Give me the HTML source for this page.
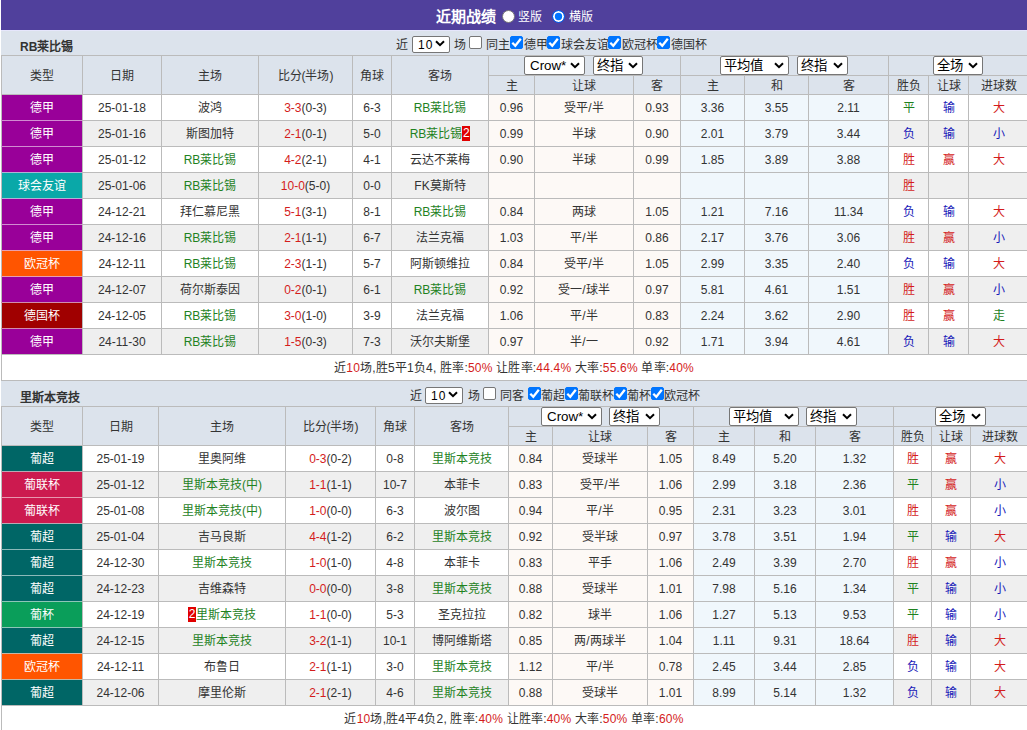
<!DOCTYPE html>
<html lang="zh-CN"><head><meta charset="utf-8"><style>
*{margin:0;padding:0;box-sizing:border-box}
html,body{width:1027px;height:730px;overflow:hidden;background:#fff}
body{font-family:"Liberation Sans",sans-serif;font-size:12px;color:#333}
#w{position:relative;width:1027px;height:730px;overflow:hidden}
#w>div{position:absolute}
.c{text-align:center;line-height:27px;white-space:nowrap;overflow:hidden}
.lg{color:#fff;font-weight:500}
.sm{letter-spacing:0.2px}
.st{font-weight:bold;font-size:12px;color:#333;white-space:nowrap}
.tx{height:24px;line-height:29px;white-space:nowrap}
.ttl{font-weight:bold;font-size:15px;color:#fff;white-space:nowrap}
.ttx{height:30px;line-height:34px;color:#fff;white-space:nowrap}
.rd{width:13px;height:13px;border-radius:50%;background:#fff;border:1px solid #767676}
.rd.on{background:#0075ff;border:1px solid #0a5ee8;box-shadow:inset 0 0 0 1.8px #fff}
.cb{width:13px;height:13px;border:1px solid #767676;border-radius:2px;background:#fff}
.cb.on{background:#0075ff;border-color:#0075ff}
.cb.on svg{position:absolute;left:-1px;top:-1px}
.sel{background:#fff;border:1px solid #767676;border-radius:2px;box-sizing:content-box;font-size:13.33px;color:#000}
.sel span{position:absolute;left:4px;top:0;line-height:18px;white-space:nowrap}
.sel .chev{position:absolute;right:4px;top:5px}
.s10 .chev{top:3px}
.s10{font-size:12px;letter-spacing:1px}
.s10 span{line-height:16px;top:0px;font-size:12px}
.bd{background:#e00000;color:#fff;display:inline-block;width:8px;height:15px;line-height:15px;vertical-align:middle;text-align:center;position:relative;top:-1px}
</style></head>
<body><div id="w">
<div style="left:1px;top:0px;width:1026px;height:30px;background:#50409c"></div>
<div style="left:1px;top:30px;width:1026px;height:1px;background:#e6e6fc"></div>
<div class="ttl" style="left:436px;top:0;height:30px;line-height:33px">近期战绩</div>
<div class="rd" style="left:502px;top:10px"></div>
<div class="ttx" style="left:518px;top:0">竖版</div>
<div class="rd on" style="left:552px;top:10px"></div>
<div class="ttx" style="left:569px;top:0">横版</div>
<div style="left:1px;top:31px;width:1026px;height:24px;background:#dce3ec"></div>
<div class="st" style="left:20px;top:31px;height:24px;line-height:32px">RB莱比锡</div>
<div class="tx" style="left:396px;top:31px">近</div>
<div class="sel s10" style="left:412px;top:36px;width:36px;height:15px"><span style="left:5px">10</span><svg class="chev" width="10" height="7"><path d="M1 1.2 L5 5.2 L9 1.2" fill="none" stroke="#000" stroke-width="2"/></svg></div>
<div class="tx" style="left:454px;top:31px">场</div>
<div class="cb" style="left:469px;top:36px"></div>
<div class="tx" style="left:486px;top:31px">同主</div>
<div class="cb on" style="left:510px;top:36px"><svg width="13" height="13"><path d="M2.3 6.8 L5.3 9.8 L10.8 2.8" fill="none" stroke="#fff" stroke-width="2.3"/></svg></div>
<div class="tx" style="left:524px;top:31px">德甲</div>
<div class="cb on" style="left:547px;top:36px"><svg width="13" height="13"><path d="M2.3 6.8 L5.3 9.8 L10.8 2.8" fill="none" stroke="#fff" stroke-width="2.3"/></svg></div>
<div class="tx" style="left:561px;top:31px">球会友谊</div>
<div class="cb on" style="left:608px;top:36px"><svg width="13" height="13"><path d="M2.3 6.8 L5.3 9.8 L10.8 2.8" fill="none" stroke="#fff" stroke-width="2.3"/></svg></div>
<div class="tx" style="left:622px;top:31px">欧冠杯</div>
<div class="cb on" style="left:657px;top:36px"><svg width="13" height="13"><path d="M2.3 6.8 L5.3 9.8 L10.8 2.8" fill="none" stroke="#fff" stroke-width="2.3"/></svg></div>
<div class="tx" style="left:671px;top:31px">德国杯</div>
<div style="left:1px;top:55px;width:1026px;height:1px;background:#bbbbbb"></div>
<div style="left:1px;top:56px;width:1026px;height:38px;background:#dce3ec"></div>
<div class="c hd" style="left:2px;top:56px;width:80px;height:38px;line-height:40px">类型</div>
<div class="c hd" style="left:83px;top:56px;width:78px;height:38px;line-height:40px">日期</div>
<div class="c hd" style="left:162px;top:56px;width:96px;height:38px;line-height:40px">主场</div>
<div class="c hd" style="left:259px;top:56px;width:93px;height:38px;line-height:40px">比分(半场)</div>
<div class="c hd" style="left:353px;top:56px;width:38px;height:38px;line-height:40px">角球</div>
<div class="c hd" style="left:392px;top:56px;width:96px;height:38px;line-height:40px">客场</div>
<div class="c hd" style="left:489px;top:76px;width:45px;height:18px;line-height:21px">主</div>
<div class="c hd" style="left:535px;top:76px;width:98px;height:18px;line-height:21px">让球</div>
<div class="c hd" style="left:634px;top:76px;width:46px;height:18px;line-height:21px">客</div>
<div class="c hd" style="left:681px;top:76px;width:63px;height:18px;line-height:21px">主</div>
<div class="c hd" style="left:745px;top:76px;width:63px;height:18px;line-height:21px">和</div>
<div class="c hd" style="left:809px;top:76px;width:79px;height:18px;line-height:21px">客</div>
<div class="c hd" style="left:889px;top:76px;width:39px;height:18px;line-height:21px">胜负</div>
<div class="c hd" style="left:929px;top:76px;width:39px;height:18px;line-height:21px">让球</div>
<div class="c hd" style="left:969px;top:76px;width:59px;height:18px;line-height:21px">进球数</div>
<div style="left:1px;top:56px;width:1px;height:38px;background:#bbbbbb"></div>
<div style="left:82px;top:56px;width:1px;height:38px;background:#bbbbbb"></div>
<div style="left:161px;top:56px;width:1px;height:38px;background:#bbbbbb"></div>
<div style="left:258px;top:56px;width:1px;height:38px;background:#bbbbbb"></div>
<div style="left:352px;top:56px;width:1px;height:38px;background:#bbbbbb"></div>
<div style="left:391px;top:56px;width:1px;height:38px;background:#bbbbbb"></div>
<div style="left:488px;top:56px;width:1px;height:38px;background:#bbbbbb"></div>
<div style="left:534px;top:75px;width:1px;height:19px;background:#bbbbbb"></div>
<div style="left:633px;top:75px;width:1px;height:19px;background:#bbbbbb"></div>
<div style="left:680px;top:56px;width:1px;height:38px;background:#bbbbbb"></div>
<div style="left:744px;top:75px;width:1px;height:19px;background:#bbbbbb"></div>
<div style="left:808px;top:75px;width:1px;height:19px;background:#bbbbbb"></div>
<div style="left:888px;top:56px;width:1px;height:38px;background:#bbbbbb"></div>
<div style="left:928px;top:75px;width:1px;height:19px;background:#bbbbbb"></div>
<div style="left:968px;top:75px;width:1px;height:19px;background:#bbbbbb"></div>
<div style="left:488px;top:75px;width:539px;height:1px;background:#bbbbbb"></div>
<div style="left:1px;top:94px;width:1026px;height:1px;background:#bbbbbb"></div>
<div class="c lg" style="left:2px;top:95px;width:80px;height:25px;background:#990099">德甲</div>
<div class="c " style="left:83px;top:95px;width:78px;height:25px;background:#ffffff">25-01-18</div>
<div class="c " style="left:162px;top:95px;width:96px;height:25px;background:#ffffff">波鸿</div>
<div class="c " style="left:259px;top:95px;width:93px;height:25px;background:#ffffff"><span style="color:#d41c1c">3-3</span>(0-3)</div>
<div class="c " style="left:353px;top:95px;width:38px;height:25px;background:#ffffff">6-3</div>
<div class="c " style="left:392px;top:95px;width:96px;height:25px;background:#ffffff"><span style="color:#1f821f">RB莱比锡</span></div>
<div class="c " style="left:489px;top:95px;width:45px;height:25px;background:#fdf9f6">0.96</div>
<div class="c " style="left:535px;top:95px;width:98px;height:25px;background:#fdf9f6">受平/半</div>
<div class="c " style="left:634px;top:95px;width:46px;height:25px;background:#fdf9f6">0.93</div>
<div class="c " style="left:681px;top:95px;width:63px;height:25px;background:#f0f7fc">3.36</div>
<div class="c " style="left:745px;top:95px;width:63px;height:25px;background:#f0f7fc">3.55</div>
<div class="c " style="left:809px;top:95px;width:79px;height:25px;background:#f0f7fc">2.11</div>
<div class="c " style="left:889px;top:95px;width:39px;height:25px;background:#ffffff"><span style="color:#1f821f">平</span></div>
<div class="c " style="left:929px;top:95px;width:39px;height:25px;background:#ffffff"><span style="color:#1818b8">输</span></div>
<div class="c " style="left:969px;top:95px;width:59px;height:25px;background:#ffffff"><span style="color:#d41c1c">大</span></div>
<div style="left:1px;top:95px;width:1px;height:25px;background:#bbbbbb"></div>
<div style="left:82px;top:95px;width:1px;height:25px;background:#bbbbbb"></div>
<div style="left:161px;top:95px;width:1px;height:25px;background:#bbbbbb"></div>
<div style="left:258px;top:95px;width:1px;height:25px;background:#bbbbbb"></div>
<div style="left:352px;top:95px;width:1px;height:25px;background:#bbbbbb"></div>
<div style="left:391px;top:95px;width:1px;height:25px;background:#bbbbbb"></div>
<div style="left:488px;top:95px;width:1px;height:25px;background:#bbbbbb"></div>
<div style="left:534px;top:95px;width:1px;height:25px;background:#bbbbbb"></div>
<div style="left:633px;top:95px;width:1px;height:25px;background:#bbbbbb"></div>
<div style="left:680px;top:95px;width:1px;height:25px;background:#bbbbbb"></div>
<div style="left:744px;top:95px;width:1px;height:25px;background:#bbbbbb"></div>
<div style="left:808px;top:95px;width:1px;height:25px;background:#bbbbbb"></div>
<div style="left:888px;top:95px;width:1px;height:25px;background:#bbbbbb"></div>
<div style="left:928px;top:95px;width:1px;height:25px;background:#bbbbbb"></div>
<div style="left:968px;top:95px;width:1px;height:25px;background:#bbbbbb"></div>
<div style="left:1px;top:120px;width:1026px;height:1px;background:#bbbbbb"></div>
<div style="left:1px;top:120px;width:81px;height:1px;background:#d18cd1"></div>
<div class="c lg" style="left:2px;top:121px;width:80px;height:25px;background:#990099">德甲</div>
<div class="c " style="left:83px;top:121px;width:78px;height:25px;background:#efefef">25-01-16</div>
<div class="c " style="left:162px;top:121px;width:96px;height:25px;background:#efefef">斯图加特</div>
<div class="c " style="left:259px;top:121px;width:93px;height:25px;background:#efefef"><span style="color:#d41c1c">2-1</span>(0-1)</div>
<div class="c " style="left:353px;top:121px;width:38px;height:25px;background:#efefef">5-0</div>
<div class="c " style="left:392px;top:121px;width:96px;height:25px;background:#efefef"><span style="color:#1f821f">RB莱比锡<span class="bd">2</span></span></div>
<div class="c " style="left:489px;top:121px;width:45px;height:25px;background:#fdf9f6">0.99</div>
<div class="c " style="left:535px;top:121px;width:98px;height:25px;background:#fdf9f6">半球</div>
<div class="c " style="left:634px;top:121px;width:46px;height:25px;background:#fdf9f6">0.90</div>
<div class="c " style="left:681px;top:121px;width:63px;height:25px;background:#f0f7fc">2.01</div>
<div class="c " style="left:745px;top:121px;width:63px;height:25px;background:#f0f7fc">3.79</div>
<div class="c " style="left:809px;top:121px;width:79px;height:25px;background:#f0f7fc">3.44</div>
<div class="c " style="left:889px;top:121px;width:39px;height:25px;background:#efefef"><span style="color:#1818b8">负</span></div>
<div class="c " style="left:929px;top:121px;width:39px;height:25px;background:#efefef"><span style="color:#1818b8">输</span></div>
<div class="c " style="left:969px;top:121px;width:59px;height:25px;background:#efefef"><span style="color:#1818b8">小</span></div>
<div style="left:1px;top:121px;width:1px;height:25px;background:#bbbbbb"></div>
<div style="left:82px;top:121px;width:1px;height:25px;background:#bbbbbb"></div>
<div style="left:161px;top:121px;width:1px;height:25px;background:#bbbbbb"></div>
<div style="left:258px;top:121px;width:1px;height:25px;background:#bbbbbb"></div>
<div style="left:352px;top:121px;width:1px;height:25px;background:#bbbbbb"></div>
<div style="left:391px;top:121px;width:1px;height:25px;background:#bbbbbb"></div>
<div style="left:488px;top:121px;width:1px;height:25px;background:#bbbbbb"></div>
<div style="left:534px;top:121px;width:1px;height:25px;background:#bbbbbb"></div>
<div style="left:633px;top:121px;width:1px;height:25px;background:#bbbbbb"></div>
<div style="left:680px;top:121px;width:1px;height:25px;background:#bbbbbb"></div>
<div style="left:744px;top:121px;width:1px;height:25px;background:#bbbbbb"></div>
<div style="left:808px;top:121px;width:1px;height:25px;background:#bbbbbb"></div>
<div style="left:888px;top:121px;width:1px;height:25px;background:#bbbbbb"></div>
<div style="left:928px;top:121px;width:1px;height:25px;background:#bbbbbb"></div>
<div style="left:968px;top:121px;width:1px;height:25px;background:#bbbbbb"></div>
<div style="left:1px;top:146px;width:1026px;height:1px;background:#bbbbbb"></div>
<div style="left:1px;top:146px;width:81px;height:1px;background:#d18cd1"></div>
<div class="c lg" style="left:2px;top:147px;width:80px;height:25px;background:#990099">德甲</div>
<div class="c " style="left:83px;top:147px;width:78px;height:25px;background:#ffffff">25-01-12</div>
<div class="c " style="left:162px;top:147px;width:96px;height:25px;background:#ffffff"><span style="color:#1f821f">RB莱比锡</span></div>
<div class="c " style="left:259px;top:147px;width:93px;height:25px;background:#ffffff"><span style="color:#d41c1c">4-2</span>(2-1)</div>
<div class="c " style="left:353px;top:147px;width:38px;height:25px;background:#ffffff">4-1</div>
<div class="c " style="left:392px;top:147px;width:96px;height:25px;background:#ffffff">云达不莱梅</div>
<div class="c " style="left:489px;top:147px;width:45px;height:25px;background:#fdf9f6">0.90</div>
<div class="c " style="left:535px;top:147px;width:98px;height:25px;background:#fdf9f6">半球</div>
<div class="c " style="left:634px;top:147px;width:46px;height:25px;background:#fdf9f6">0.99</div>
<div class="c " style="left:681px;top:147px;width:63px;height:25px;background:#f0f7fc">1.85</div>
<div class="c " style="left:745px;top:147px;width:63px;height:25px;background:#f0f7fc">3.89</div>
<div class="c " style="left:809px;top:147px;width:79px;height:25px;background:#f0f7fc">3.88</div>
<div class="c " style="left:889px;top:147px;width:39px;height:25px;background:#ffffff"><span style="color:#d41c1c">胜</span></div>
<div class="c " style="left:929px;top:147px;width:39px;height:25px;background:#ffffff"><span style="color:#d41c1c">赢</span></div>
<div class="c " style="left:969px;top:147px;width:59px;height:25px;background:#ffffff"><span style="color:#d41c1c">大</span></div>
<div style="left:1px;top:147px;width:1px;height:25px;background:#bbbbbb"></div>
<div style="left:82px;top:147px;width:1px;height:25px;background:#bbbbbb"></div>
<div style="left:161px;top:147px;width:1px;height:25px;background:#bbbbbb"></div>
<div style="left:258px;top:147px;width:1px;height:25px;background:#bbbbbb"></div>
<div style="left:352px;top:147px;width:1px;height:25px;background:#bbbbbb"></div>
<div style="left:391px;top:147px;width:1px;height:25px;background:#bbbbbb"></div>
<div style="left:488px;top:147px;width:1px;height:25px;background:#bbbbbb"></div>
<div style="left:534px;top:147px;width:1px;height:25px;background:#bbbbbb"></div>
<div style="left:633px;top:147px;width:1px;height:25px;background:#bbbbbb"></div>
<div style="left:680px;top:147px;width:1px;height:25px;background:#bbbbbb"></div>
<div style="left:744px;top:147px;width:1px;height:25px;background:#bbbbbb"></div>
<div style="left:808px;top:147px;width:1px;height:25px;background:#bbbbbb"></div>
<div style="left:888px;top:147px;width:1px;height:25px;background:#bbbbbb"></div>
<div style="left:928px;top:147px;width:1px;height:25px;background:#bbbbbb"></div>
<div style="left:968px;top:147px;width:1px;height:25px;background:#bbbbbb"></div>
<div style="left:1px;top:172px;width:1026px;height:1px;background:#bbbbbb"></div>
<div style="left:1px;top:172px;width:81px;height:1px;background:#b0b2d4"></div>
<div class="c lg" style="left:2px;top:173px;width:80px;height:25px;background:#0aa8a8">球会友谊</div>
<div class="c " style="left:83px;top:173px;width:78px;height:25px;background:#efefef">25-01-06</div>
<div class="c " style="left:162px;top:173px;width:96px;height:25px;background:#efefef"><span style="color:#1f821f">RB莱比锡</span></div>
<div class="c " style="left:259px;top:173px;width:93px;height:25px;background:#efefef"><span style="color:#d41c1c">10-0</span>(5-0)</div>
<div class="c " style="left:353px;top:173px;width:38px;height:25px;background:#efefef">0-0</div>
<div class="c " style="left:392px;top:173px;width:96px;height:25px;background:#efefef">FK莫斯特</div>
<div class="c " style="left:489px;top:173px;width:45px;height:25px;background:#fdf9f6"></div>
<div class="c " style="left:535px;top:173px;width:98px;height:25px;background:#fdf9f6"></div>
<div class="c " style="left:634px;top:173px;width:46px;height:25px;background:#fdf9f6"></div>
<div class="c " style="left:681px;top:173px;width:63px;height:25px;background:#f0f7fc"></div>
<div class="c " style="left:745px;top:173px;width:63px;height:25px;background:#f0f7fc"></div>
<div class="c " style="left:809px;top:173px;width:79px;height:25px;background:#f0f7fc"></div>
<div class="c " style="left:889px;top:173px;width:39px;height:25px;background:#efefef"><span style="color:#d41c1c">胜</span></div>
<div class="c " style="left:929px;top:173px;width:39px;height:25px;background:#efefef"></div>
<div class="c " style="left:969px;top:173px;width:59px;height:25px;background:#efefef"></div>
<div style="left:1px;top:173px;width:1px;height:25px;background:#bbbbbb"></div>
<div style="left:82px;top:173px;width:1px;height:25px;background:#bbbbbb"></div>
<div style="left:161px;top:173px;width:1px;height:25px;background:#bbbbbb"></div>
<div style="left:258px;top:173px;width:1px;height:25px;background:#bbbbbb"></div>
<div style="left:352px;top:173px;width:1px;height:25px;background:#bbbbbb"></div>
<div style="left:391px;top:173px;width:1px;height:25px;background:#bbbbbb"></div>
<div style="left:488px;top:173px;width:1px;height:25px;background:#bbbbbb"></div>
<div style="left:534px;top:173px;width:1px;height:25px;background:#bbbbbb"></div>
<div style="left:633px;top:173px;width:1px;height:25px;background:#bbbbbb"></div>
<div style="left:680px;top:173px;width:1px;height:25px;background:#bbbbbb"></div>
<div style="left:744px;top:173px;width:1px;height:25px;background:#bbbbbb"></div>
<div style="left:808px;top:173px;width:1px;height:25px;background:#bbbbbb"></div>
<div style="left:888px;top:173px;width:1px;height:25px;background:#bbbbbb"></div>
<div style="left:928px;top:173px;width:1px;height:25px;background:#bbbbbb"></div>
<div style="left:968px;top:173px;width:1px;height:25px;background:#bbbbbb"></div>
<div style="left:1px;top:198px;width:1026px;height:1px;background:#bbbbbb"></div>
<div style="left:1px;top:198px;width:81px;height:1px;background:#b0b2d4"></div>
<div class="c lg" style="left:2px;top:199px;width:80px;height:25px;background:#990099">德甲</div>
<div class="c " style="left:83px;top:199px;width:78px;height:25px;background:#ffffff">24-12-21</div>
<div class="c " style="left:162px;top:199px;width:96px;height:25px;background:#ffffff">拜仁慕尼黑</div>
<div class="c " style="left:259px;top:199px;width:93px;height:25px;background:#ffffff"><span style="color:#d41c1c">5-1</span>(3-1)</div>
<div class="c " style="left:353px;top:199px;width:38px;height:25px;background:#ffffff">8-1</div>
<div class="c " style="left:392px;top:199px;width:96px;height:25px;background:#ffffff"><span style="color:#1f821f">RB莱比锡</span></div>
<div class="c " style="left:489px;top:199px;width:45px;height:25px;background:#fdf9f6">0.84</div>
<div class="c " style="left:535px;top:199px;width:98px;height:25px;background:#fdf9f6">两球</div>
<div class="c " style="left:634px;top:199px;width:46px;height:25px;background:#fdf9f6">1.05</div>
<div class="c " style="left:681px;top:199px;width:63px;height:25px;background:#f0f7fc">1.21</div>
<div class="c " style="left:745px;top:199px;width:63px;height:25px;background:#f0f7fc">7.16</div>
<div class="c " style="left:809px;top:199px;width:79px;height:25px;background:#f0f7fc">11.34</div>
<div class="c " style="left:889px;top:199px;width:39px;height:25px;background:#ffffff"><span style="color:#1818b8">负</span></div>
<div class="c " style="left:929px;top:199px;width:39px;height:25px;background:#ffffff"><span style="color:#1818b8">输</span></div>
<div class="c " style="left:969px;top:199px;width:59px;height:25px;background:#ffffff"><span style="color:#d41c1c">大</span></div>
<div style="left:1px;top:199px;width:1px;height:25px;background:#bbbbbb"></div>
<div style="left:82px;top:199px;width:1px;height:25px;background:#bbbbbb"></div>
<div style="left:161px;top:199px;width:1px;height:25px;background:#bbbbbb"></div>
<div style="left:258px;top:199px;width:1px;height:25px;background:#bbbbbb"></div>
<div style="left:352px;top:199px;width:1px;height:25px;background:#bbbbbb"></div>
<div style="left:391px;top:199px;width:1px;height:25px;background:#bbbbbb"></div>
<div style="left:488px;top:199px;width:1px;height:25px;background:#bbbbbb"></div>
<div style="left:534px;top:199px;width:1px;height:25px;background:#bbbbbb"></div>
<div style="left:633px;top:199px;width:1px;height:25px;background:#bbbbbb"></div>
<div style="left:680px;top:199px;width:1px;height:25px;background:#bbbbbb"></div>
<div style="left:744px;top:199px;width:1px;height:25px;background:#bbbbbb"></div>
<div style="left:808px;top:199px;width:1px;height:25px;background:#bbbbbb"></div>
<div style="left:888px;top:199px;width:1px;height:25px;background:#bbbbbb"></div>
<div style="left:928px;top:199px;width:1px;height:25px;background:#bbbbbb"></div>
<div style="left:968px;top:199px;width:1px;height:25px;background:#bbbbbb"></div>
<div style="left:1px;top:224px;width:1026px;height:1px;background:#bbbbbb"></div>
<div style="left:1px;top:224px;width:81px;height:1px;background:#d18cd1"></div>
<div class="c lg" style="left:2px;top:225px;width:80px;height:25px;background:#990099">德甲</div>
<div class="c " style="left:83px;top:225px;width:78px;height:25px;background:#efefef">24-12-16</div>
<div class="c " style="left:162px;top:225px;width:96px;height:25px;background:#efefef"><span style="color:#1f821f">RB莱比锡</span></div>
<div class="c " style="left:259px;top:225px;width:93px;height:25px;background:#efefef"><span style="color:#d41c1c">2-1</span>(1-1)</div>
<div class="c " style="left:353px;top:225px;width:38px;height:25px;background:#efefef">6-7</div>
<div class="c " style="left:392px;top:225px;width:96px;height:25px;background:#efefef">法兰克福</div>
<div class="c " style="left:489px;top:225px;width:45px;height:25px;background:#fdf9f6">1.03</div>
<div class="c " style="left:535px;top:225px;width:98px;height:25px;background:#fdf9f6">平/半</div>
<div class="c " style="left:634px;top:225px;width:46px;height:25px;background:#fdf9f6">0.86</div>
<div class="c " style="left:681px;top:225px;width:63px;height:25px;background:#f0f7fc">2.17</div>
<div class="c " style="left:745px;top:225px;width:63px;height:25px;background:#f0f7fc">3.76</div>
<div class="c " style="left:809px;top:225px;width:79px;height:25px;background:#f0f7fc">3.06</div>
<div class="c " style="left:889px;top:225px;width:39px;height:25px;background:#efefef"><span style="color:#d41c1c">胜</span></div>
<div class="c " style="left:929px;top:225px;width:39px;height:25px;background:#efefef"><span style="color:#d41c1c">赢</span></div>
<div class="c " style="left:969px;top:225px;width:59px;height:25px;background:#efefef"><span style="color:#1818b8">小</span></div>
<div style="left:1px;top:225px;width:1px;height:25px;background:#bbbbbb"></div>
<div style="left:82px;top:225px;width:1px;height:25px;background:#bbbbbb"></div>
<div style="left:161px;top:225px;width:1px;height:25px;background:#bbbbbb"></div>
<div style="left:258px;top:225px;width:1px;height:25px;background:#bbbbbb"></div>
<div style="left:352px;top:225px;width:1px;height:25px;background:#bbbbbb"></div>
<div style="left:391px;top:225px;width:1px;height:25px;background:#bbbbbb"></div>
<div style="left:488px;top:225px;width:1px;height:25px;background:#bbbbbb"></div>
<div style="left:534px;top:225px;width:1px;height:25px;background:#bbbbbb"></div>
<div style="left:633px;top:225px;width:1px;height:25px;background:#bbbbbb"></div>
<div style="left:680px;top:225px;width:1px;height:25px;background:#bbbbbb"></div>
<div style="left:744px;top:225px;width:1px;height:25px;background:#bbbbbb"></div>
<div style="left:808px;top:225px;width:1px;height:25px;background:#bbbbbb"></div>
<div style="left:888px;top:225px;width:1px;height:25px;background:#bbbbbb"></div>
<div style="left:928px;top:225px;width:1px;height:25px;background:#bbbbbb"></div>
<div style="left:968px;top:225px;width:1px;height:25px;background:#bbbbbb"></div>
<div style="left:1px;top:250px;width:1026px;height:1px;background:#bbbbbb"></div>
<div style="left:1px;top:250px;width:81px;height:1px;background:#e89fae"></div>
<div class="c lg" style="left:2px;top:251px;width:80px;height:25px;background:#ff5500">欧冠杯</div>
<div class="c " style="left:83px;top:251px;width:78px;height:25px;background:#ffffff">24-12-11</div>
<div class="c " style="left:162px;top:251px;width:96px;height:25px;background:#ffffff"><span style="color:#1f821f">RB莱比锡</span></div>
<div class="c " style="left:259px;top:251px;width:93px;height:25px;background:#ffffff"><span style="color:#d41c1c">2-3</span>(1-1)</div>
<div class="c " style="left:353px;top:251px;width:38px;height:25px;background:#ffffff">5-7</div>
<div class="c " style="left:392px;top:251px;width:96px;height:25px;background:#ffffff">阿斯顿维拉</div>
<div class="c " style="left:489px;top:251px;width:45px;height:25px;background:#fdf9f6">0.84</div>
<div class="c " style="left:535px;top:251px;width:98px;height:25px;background:#fdf9f6">受平/半</div>
<div class="c " style="left:634px;top:251px;width:46px;height:25px;background:#fdf9f6">1.05</div>
<div class="c " style="left:681px;top:251px;width:63px;height:25px;background:#f0f7fc">2.99</div>
<div class="c " style="left:745px;top:251px;width:63px;height:25px;background:#f0f7fc">3.35</div>
<div class="c " style="left:809px;top:251px;width:79px;height:25px;background:#f0f7fc">2.40</div>
<div class="c " style="left:889px;top:251px;width:39px;height:25px;background:#ffffff"><span style="color:#1818b8">负</span></div>
<div class="c " style="left:929px;top:251px;width:39px;height:25px;background:#ffffff"><span style="color:#1818b8">输</span></div>
<div class="c " style="left:969px;top:251px;width:59px;height:25px;background:#ffffff"><span style="color:#d41c1c">大</span></div>
<div style="left:1px;top:251px;width:1px;height:25px;background:#bbbbbb"></div>
<div style="left:82px;top:251px;width:1px;height:25px;background:#bbbbbb"></div>
<div style="left:161px;top:251px;width:1px;height:25px;background:#bbbbbb"></div>
<div style="left:258px;top:251px;width:1px;height:25px;background:#bbbbbb"></div>
<div style="left:352px;top:251px;width:1px;height:25px;background:#bbbbbb"></div>
<div style="left:391px;top:251px;width:1px;height:25px;background:#bbbbbb"></div>
<div style="left:488px;top:251px;width:1px;height:25px;background:#bbbbbb"></div>
<div style="left:534px;top:251px;width:1px;height:25px;background:#bbbbbb"></div>
<div style="left:633px;top:251px;width:1px;height:25px;background:#bbbbbb"></div>
<div style="left:680px;top:251px;width:1px;height:25px;background:#bbbbbb"></div>
<div style="left:744px;top:251px;width:1px;height:25px;background:#bbbbbb"></div>
<div style="left:808px;top:251px;width:1px;height:25px;background:#bbbbbb"></div>
<div style="left:888px;top:251px;width:1px;height:25px;background:#bbbbbb"></div>
<div style="left:928px;top:251px;width:1px;height:25px;background:#bbbbbb"></div>
<div style="left:968px;top:251px;width:1px;height:25px;background:#bbbbbb"></div>
<div style="left:1px;top:276px;width:1026px;height:1px;background:#bbbbbb"></div>
<div style="left:1px;top:276px;width:81px;height:1px;background:#e89fae"></div>
<div class="c lg" style="left:2px;top:277px;width:80px;height:25px;background:#990099">德甲</div>
<div class="c " style="left:83px;top:277px;width:78px;height:25px;background:#efefef">24-12-07</div>
<div class="c " style="left:162px;top:277px;width:96px;height:25px;background:#efefef">荷尔斯泰因</div>
<div class="c " style="left:259px;top:277px;width:93px;height:25px;background:#efefef"><span style="color:#d41c1c">0-2</span>(0-1)</div>
<div class="c " style="left:353px;top:277px;width:38px;height:25px;background:#efefef">6-1</div>
<div class="c " style="left:392px;top:277px;width:96px;height:25px;background:#efefef"><span style="color:#1f821f">RB莱比锡</span></div>
<div class="c " style="left:489px;top:277px;width:45px;height:25px;background:#fdf9f6">0.92</div>
<div class="c " style="left:535px;top:277px;width:98px;height:25px;background:#fdf9f6">受一/球半</div>
<div class="c " style="left:634px;top:277px;width:46px;height:25px;background:#fdf9f6">0.97</div>
<div class="c " style="left:681px;top:277px;width:63px;height:25px;background:#f0f7fc">5.81</div>
<div class="c " style="left:745px;top:277px;width:63px;height:25px;background:#f0f7fc">4.61</div>
<div class="c " style="left:809px;top:277px;width:79px;height:25px;background:#f0f7fc">1.51</div>
<div class="c " style="left:889px;top:277px;width:39px;height:25px;background:#efefef"><span style="color:#d41c1c">胜</span></div>
<div class="c " style="left:929px;top:277px;width:39px;height:25px;background:#efefef"><span style="color:#d41c1c">赢</span></div>
<div class="c " style="left:969px;top:277px;width:59px;height:25px;background:#efefef"><span style="color:#1818b8">小</span></div>
<div style="left:1px;top:277px;width:1px;height:25px;background:#bbbbbb"></div>
<div style="left:82px;top:277px;width:1px;height:25px;background:#bbbbbb"></div>
<div style="left:161px;top:277px;width:1px;height:25px;background:#bbbbbb"></div>
<div style="left:258px;top:277px;width:1px;height:25px;background:#bbbbbb"></div>
<div style="left:352px;top:277px;width:1px;height:25px;background:#bbbbbb"></div>
<div style="left:391px;top:277px;width:1px;height:25px;background:#bbbbbb"></div>
<div style="left:488px;top:277px;width:1px;height:25px;background:#bbbbbb"></div>
<div style="left:534px;top:277px;width:1px;height:25px;background:#bbbbbb"></div>
<div style="left:633px;top:277px;width:1px;height:25px;background:#bbbbbb"></div>
<div style="left:680px;top:277px;width:1px;height:25px;background:#bbbbbb"></div>
<div style="left:744px;top:277px;width:1px;height:25px;background:#bbbbbb"></div>
<div style="left:808px;top:277px;width:1px;height:25px;background:#bbbbbb"></div>
<div style="left:888px;top:277px;width:1px;height:25px;background:#bbbbbb"></div>
<div style="left:928px;top:277px;width:1px;height:25px;background:#bbbbbb"></div>
<div style="left:968px;top:277px;width:1px;height:25px;background:#bbbbbb"></div>
<div style="left:1px;top:302px;width:1026px;height:1px;background:#bbbbbb"></div>
<div style="left:1px;top:302px;width:81px;height:1px;background:#d28cae"></div>
<div class="c lg" style="left:2px;top:303px;width:80px;height:25px;background:#a00000">德国杯</div>
<div class="c " style="left:83px;top:303px;width:78px;height:25px;background:#ffffff">24-12-05</div>
<div class="c " style="left:162px;top:303px;width:96px;height:25px;background:#ffffff"><span style="color:#1f821f">RB莱比锡</span></div>
<div class="c " style="left:259px;top:303px;width:93px;height:25px;background:#ffffff"><span style="color:#d41c1c">3-0</span>(1-0)</div>
<div class="c " style="left:353px;top:303px;width:38px;height:25px;background:#ffffff">3-9</div>
<div class="c " style="left:392px;top:303px;width:96px;height:25px;background:#ffffff">法兰克福</div>
<div class="c " style="left:489px;top:303px;width:45px;height:25px;background:#fdf9f6">1.06</div>
<div class="c " style="left:535px;top:303px;width:98px;height:25px;background:#fdf9f6">平/半</div>
<div class="c " style="left:634px;top:303px;width:46px;height:25px;background:#fdf9f6">0.83</div>
<div class="c " style="left:681px;top:303px;width:63px;height:25px;background:#f0f7fc">2.24</div>
<div class="c " style="left:745px;top:303px;width:63px;height:25px;background:#f0f7fc">3.62</div>
<div class="c " style="left:809px;top:303px;width:79px;height:25px;background:#f0f7fc">2.90</div>
<div class="c " style="left:889px;top:303px;width:39px;height:25px;background:#ffffff"><span style="color:#d41c1c">胜</span></div>
<div class="c " style="left:929px;top:303px;width:39px;height:25px;background:#ffffff"><span style="color:#d41c1c">赢</span></div>
<div class="c " style="left:969px;top:303px;width:59px;height:25px;background:#ffffff"><span style="color:#1f821f">走</span></div>
<div style="left:1px;top:303px;width:1px;height:25px;background:#bbbbbb"></div>
<div style="left:82px;top:303px;width:1px;height:25px;background:#bbbbbb"></div>
<div style="left:161px;top:303px;width:1px;height:25px;background:#bbbbbb"></div>
<div style="left:258px;top:303px;width:1px;height:25px;background:#bbbbbb"></div>
<div style="left:352px;top:303px;width:1px;height:25px;background:#bbbbbb"></div>
<div style="left:391px;top:303px;width:1px;height:25px;background:#bbbbbb"></div>
<div style="left:488px;top:303px;width:1px;height:25px;background:#bbbbbb"></div>
<div style="left:534px;top:303px;width:1px;height:25px;background:#bbbbbb"></div>
<div style="left:633px;top:303px;width:1px;height:25px;background:#bbbbbb"></div>
<div style="left:680px;top:303px;width:1px;height:25px;background:#bbbbbb"></div>
<div style="left:744px;top:303px;width:1px;height:25px;background:#bbbbbb"></div>
<div style="left:808px;top:303px;width:1px;height:25px;background:#bbbbbb"></div>
<div style="left:888px;top:303px;width:1px;height:25px;background:#bbbbbb"></div>
<div style="left:928px;top:303px;width:1px;height:25px;background:#bbbbbb"></div>
<div style="left:968px;top:303px;width:1px;height:25px;background:#bbbbbb"></div>
<div style="left:1px;top:328px;width:1026px;height:1px;background:#bbbbbb"></div>
<div style="left:1px;top:328px;width:81px;height:1px;background:#d28cae"></div>
<div class="c lg" style="left:2px;top:329px;width:80px;height:25px;background:#990099">德甲</div>
<div class="c " style="left:83px;top:329px;width:78px;height:25px;background:#efefef">24-11-30</div>
<div class="c " style="left:162px;top:329px;width:96px;height:25px;background:#efefef"><span style="color:#1f821f">RB莱比锡</span></div>
<div class="c " style="left:259px;top:329px;width:93px;height:25px;background:#efefef"><span style="color:#d41c1c">1-5</span>(0-3)</div>
<div class="c " style="left:353px;top:329px;width:38px;height:25px;background:#efefef">7-3</div>
<div class="c " style="left:392px;top:329px;width:96px;height:25px;background:#efefef">沃尔夫斯堡</div>
<div class="c " style="left:489px;top:329px;width:45px;height:25px;background:#fdf9f6">0.97</div>
<div class="c " style="left:535px;top:329px;width:98px;height:25px;background:#fdf9f6">半/一</div>
<div class="c " style="left:634px;top:329px;width:46px;height:25px;background:#fdf9f6">0.92</div>
<div class="c " style="left:681px;top:329px;width:63px;height:25px;background:#f0f7fc">1.71</div>
<div class="c " style="left:745px;top:329px;width:63px;height:25px;background:#f0f7fc">3.94</div>
<div class="c " style="left:809px;top:329px;width:79px;height:25px;background:#f0f7fc">4.61</div>
<div class="c " style="left:889px;top:329px;width:39px;height:25px;background:#efefef"><span style="color:#1818b8">负</span></div>
<div class="c " style="left:929px;top:329px;width:39px;height:25px;background:#efefef"><span style="color:#1818b8">输</span></div>
<div class="c " style="left:969px;top:329px;width:59px;height:25px;background:#efefef"><span style="color:#d41c1c">大</span></div>
<div style="left:1px;top:329px;width:1px;height:25px;background:#bbbbbb"></div>
<div style="left:82px;top:329px;width:1px;height:25px;background:#bbbbbb"></div>
<div style="left:161px;top:329px;width:1px;height:25px;background:#bbbbbb"></div>
<div style="left:258px;top:329px;width:1px;height:25px;background:#bbbbbb"></div>
<div style="left:352px;top:329px;width:1px;height:25px;background:#bbbbbb"></div>
<div style="left:391px;top:329px;width:1px;height:25px;background:#bbbbbb"></div>
<div style="left:488px;top:329px;width:1px;height:25px;background:#bbbbbb"></div>
<div style="left:534px;top:329px;width:1px;height:25px;background:#bbbbbb"></div>
<div style="left:633px;top:329px;width:1px;height:25px;background:#bbbbbb"></div>
<div style="left:680px;top:329px;width:1px;height:25px;background:#bbbbbb"></div>
<div style="left:744px;top:329px;width:1px;height:25px;background:#bbbbbb"></div>
<div style="left:808px;top:329px;width:1px;height:25px;background:#bbbbbb"></div>
<div style="left:888px;top:329px;width:1px;height:25px;background:#bbbbbb"></div>
<div style="left:928px;top:329px;width:1px;height:25px;background:#bbbbbb"></div>
<div style="left:968px;top:329px;width:1px;height:25px;background:#bbbbbb"></div>
<div style="left:1px;top:354px;width:1026px;height:1px;background:#bbbbbb"></div>
<div style="left:2px;top:355px;width:1025px;height:25px;background:#fff"></div>
<div class="c sm" style="left:1px;top:355px;width:1026px;height:25px">近<span style="color:#d41c1c">10</span>场,胜5平1负4, 胜率:<span style="color:#d41c1c">50%</span> 让胜率:<span style="color:#d41c1c">44.4%</span> 大率:<span style="color:#d41c1c">55.6%</span> 单率:<span style="color:#d41c1c">40%</span></div>
<div style="left:1px;top:355px;width:1px;height:25px;background:#bbbbbb"></div>
<div style="left:1px;top:380px;width:1026px;height:1px;background:#bbbbbb"></div>
<div class="sel" style="left:524px;top:56px;width:59px;height:17px"><span style="left:5px">Crow*</span><svg class="chev" width="10" height="7"><path d="M1 1.2 L5 5.2 L9 1.2" fill="none" stroke="#000" stroke-width="2"/></svg></div>
<div class="sel" style="left:593px;top:56px;width:48px;height:17px"><span style="left:3px">终指</span><svg class="chev" width="10" height="7"><path d="M1 1.2 L5 5.2 L9 1.2" fill="none" stroke="#000" stroke-width="2"/></svg></div>
<div class="sel" style="left:720px;top:56px;width:67px;height:17px"><span style="left:3px">平均值</span><svg class="chev" width="10" height="7"><path d="M1 1.2 L5 5.2 L9 1.2" fill="none" stroke="#000" stroke-width="2"/></svg></div>
<div class="sel" style="left:797px;top:56px;width:49px;height:17px"><span style="left:3px">终指</span><svg class="chev" width="10" height="7"><path d="M1 1.2 L5 5.2 L9 1.2" fill="none" stroke="#000" stroke-width="2"/></svg></div>
<div class="sel" style="left:933px;top:56px;width:48px;height:17px"><span style="left:3px">全场</span><svg class="chev" width="10" height="7"><path d="M1 1.2 L5 5.2 L9 1.2" fill="none" stroke="#000" stroke-width="2"/></svg></div>
<div style="left:1px;top:381px;width:1026px;height:25px;background:#dce3ec"></div>
<div class="st" style="left:20px;top:382px;height:24px;line-height:32px">里斯本竞技</div>
<div class="tx" style="left:410px;top:382px">近</div>
<div class="sel s10" style="left:425px;top:387px;width:36px;height:15px"><span style="left:5px">10</span><svg class="chev" width="10" height="7"><path d="M1 1.2 L5 5.2 L9 1.2" fill="none" stroke="#000" stroke-width="2"/></svg></div>
<div class="tx" style="left:468px;top:382px">场</div>
<div class="cb" style="left:483px;top:387px"></div>
<div class="tx" style="left:500px;top:382px">同客</div>
<div class="cb on" style="left:528px;top:387px"><svg width="13" height="13"><path d="M2.3 6.8 L5.3 9.8 L10.8 2.8" fill="none" stroke="#fff" stroke-width="2.3"/></svg></div>
<div class="tx" style="left:541px;top:382px">葡超</div>
<div class="cb on" style="left:565px;top:387px"><svg width="13" height="13"><path d="M2.3 6.8 L5.3 9.8 L10.8 2.8" fill="none" stroke="#fff" stroke-width="2.3"/></svg></div>
<div class="tx" style="left:578px;top:382px">葡联杯</div>
<div class="cb on" style="left:614px;top:387px"><svg width="13" height="13"><path d="M2.3 6.8 L5.3 9.8 L10.8 2.8" fill="none" stroke="#fff" stroke-width="2.3"/></svg></div>
<div class="tx" style="left:627px;top:382px">葡杯</div>
<div class="cb on" style="left:651px;top:387px"><svg width="13" height="13"><path d="M2.3 6.8 L5.3 9.8 L10.8 2.8" fill="none" stroke="#fff" stroke-width="2.3"/></svg></div>
<div class="tx" style="left:664px;top:382px">欧冠杯</div>
<div style="left:1px;top:406px;width:1026px;height:1px;background:#bbbbbb"></div>
<div style="left:1px;top:407px;width:1026px;height:38px;background:#dce3ec"></div>
<div class="c hd" style="left:2px;top:407px;width:80px;height:38px;line-height:40px">类型</div>
<div class="c hd" style="left:83px;top:407px;width:75px;height:38px;line-height:40px">日期</div>
<div class="c hd" style="left:159px;top:407px;width:126px;height:38px;line-height:40px">主场</div>
<div class="c hd" style="left:286px;top:407px;width:89px;height:38px;line-height:40px">比分(半场)</div>
<div class="c hd" style="left:376px;top:407px;width:38px;height:38px;line-height:40px">角球</div>
<div class="c hd" style="left:415px;top:407px;width:93px;height:38px;line-height:40px">客场</div>
<div class="c hd" style="left:509px;top:427px;width:43px;height:18px;line-height:21px">主</div>
<div class="c hd" style="left:553px;top:427px;width:94px;height:18px;line-height:21px">让球</div>
<div class="c hd" style="left:648px;top:427px;width:45px;height:18px;line-height:21px">客</div>
<div class="c hd" style="left:694px;top:427px;width:60px;height:18px;line-height:21px">主</div>
<div class="c hd" style="left:755px;top:427px;width:60px;height:18px;line-height:21px">和</div>
<div class="c hd" style="left:816px;top:427px;width:77px;height:18px;line-height:21px">客</div>
<div class="c hd" style="left:894px;top:427px;width:37px;height:18px;line-height:21px">胜负</div>
<div class="c hd" style="left:932px;top:427px;width:38px;height:18px;line-height:21px">让球</div>
<div class="c hd" style="left:971px;top:427px;width:57px;height:18px;line-height:21px">进球数</div>
<div style="left:1px;top:407px;width:1px;height:38px;background:#bbbbbb"></div>
<div style="left:82px;top:407px;width:1px;height:38px;background:#bbbbbb"></div>
<div style="left:158px;top:407px;width:1px;height:38px;background:#bbbbbb"></div>
<div style="left:285px;top:407px;width:1px;height:38px;background:#bbbbbb"></div>
<div style="left:375px;top:407px;width:1px;height:38px;background:#bbbbbb"></div>
<div style="left:414px;top:407px;width:1px;height:38px;background:#bbbbbb"></div>
<div style="left:508px;top:407px;width:1px;height:38px;background:#bbbbbb"></div>
<div style="left:552px;top:426px;width:1px;height:19px;background:#bbbbbb"></div>
<div style="left:647px;top:426px;width:1px;height:19px;background:#bbbbbb"></div>
<div style="left:693px;top:407px;width:1px;height:38px;background:#bbbbbb"></div>
<div style="left:754px;top:426px;width:1px;height:19px;background:#bbbbbb"></div>
<div style="left:815px;top:426px;width:1px;height:19px;background:#bbbbbb"></div>
<div style="left:893px;top:407px;width:1px;height:38px;background:#bbbbbb"></div>
<div style="left:931px;top:426px;width:1px;height:19px;background:#bbbbbb"></div>
<div style="left:970px;top:426px;width:1px;height:19px;background:#bbbbbb"></div>
<div style="left:508px;top:426px;width:519px;height:1px;background:#bbbbbb"></div>
<div style="left:1px;top:445px;width:1026px;height:1px;background:#bbbbbb"></div>
<div class="c lg" style="left:2px;top:446px;width:80px;height:25px;background:#006666">葡超</div>
<div class="c " style="left:83px;top:446px;width:75px;height:25px;background:#ffffff">25-01-19</div>
<div class="c " style="left:159px;top:446px;width:126px;height:25px;background:#ffffff">里奥阿维</div>
<div class="c " style="left:286px;top:446px;width:89px;height:25px;background:#ffffff"><span style="color:#d41c1c">0-3</span>(0-2)</div>
<div class="c " style="left:376px;top:446px;width:38px;height:25px;background:#ffffff">0-8</div>
<div class="c " style="left:415px;top:446px;width:93px;height:25px;background:#ffffff"><span style="color:#1f821f">里斯本竞技</span></div>
<div class="c " style="left:509px;top:446px;width:43px;height:25px;background:#fdf9f6">0.84</div>
<div class="c " style="left:553px;top:446px;width:94px;height:25px;background:#fdf9f6">受球半</div>
<div class="c " style="left:648px;top:446px;width:45px;height:25px;background:#fdf9f6">1.05</div>
<div class="c " style="left:694px;top:446px;width:60px;height:25px;background:#f0f7fc">8.49</div>
<div class="c " style="left:755px;top:446px;width:60px;height:25px;background:#f0f7fc">5.20</div>
<div class="c " style="left:816px;top:446px;width:77px;height:25px;background:#f0f7fc">1.32</div>
<div class="c " style="left:894px;top:446px;width:37px;height:25px;background:#ffffff"><span style="color:#d41c1c">胜</span></div>
<div class="c " style="left:932px;top:446px;width:38px;height:25px;background:#ffffff"><span style="color:#d41c1c">赢</span></div>
<div class="c " style="left:971px;top:446px;width:57px;height:25px;background:#ffffff"><span style="color:#d41c1c">大</span></div>
<div style="left:1px;top:446px;width:1px;height:25px;background:#bbbbbb"></div>
<div style="left:82px;top:446px;width:1px;height:25px;background:#bbbbbb"></div>
<div style="left:158px;top:446px;width:1px;height:25px;background:#bbbbbb"></div>
<div style="left:285px;top:446px;width:1px;height:25px;background:#bbbbbb"></div>
<div style="left:375px;top:446px;width:1px;height:25px;background:#bbbbbb"></div>
<div style="left:414px;top:446px;width:1px;height:25px;background:#bbbbbb"></div>
<div style="left:508px;top:446px;width:1px;height:25px;background:#bbbbbb"></div>
<div style="left:552px;top:446px;width:1px;height:25px;background:#bbbbbb"></div>
<div style="left:647px;top:446px;width:1px;height:25px;background:#bbbbbb"></div>
<div style="left:693px;top:446px;width:1px;height:25px;background:#bbbbbb"></div>
<div style="left:754px;top:446px;width:1px;height:25px;background:#bbbbbb"></div>
<div style="left:815px;top:446px;width:1px;height:25px;background:#bbbbbb"></div>
<div style="left:893px;top:446px;width:1px;height:25px;background:#bbbbbb"></div>
<div style="left:931px;top:446px;width:1px;height:25px;background:#bbbbbb"></div>
<div style="left:970px;top:446px;width:1px;height:25px;background:#bbbbbb"></div>
<div style="left:1px;top:471px;width:1026px;height:1px;background:#bbbbbb"></div>
<div style="left:1px;top:471px;width:81px;height:1px;background:#baa9b4"></div>
<div class="c lg" style="left:2px;top:472px;width:80px;height:25px;background:#cc1a4f">葡联杯</div>
<div class="c " style="left:83px;top:472px;width:75px;height:25px;background:#efefef">25-01-12</div>
<div class="c " style="left:159px;top:472px;width:126px;height:25px;background:#efefef"><span style="color:#1f821f">里斯本竞技(中)</span></div>
<div class="c " style="left:286px;top:472px;width:89px;height:25px;background:#efefef"><span style="color:#d41c1c">1-1</span>(1-1)</div>
<div class="c " style="left:376px;top:472px;width:38px;height:25px;background:#efefef">10-7</div>
<div class="c " style="left:415px;top:472px;width:93px;height:25px;background:#efefef">本菲卡</div>
<div class="c " style="left:509px;top:472px;width:43px;height:25px;background:#fdf9f6">0.83</div>
<div class="c " style="left:553px;top:472px;width:94px;height:25px;background:#fdf9f6">受平/半</div>
<div class="c " style="left:648px;top:472px;width:45px;height:25px;background:#fdf9f6">1.06</div>
<div class="c " style="left:694px;top:472px;width:60px;height:25px;background:#f0f7fc">2.99</div>
<div class="c " style="left:755px;top:472px;width:60px;height:25px;background:#f0f7fc">3.18</div>
<div class="c " style="left:816px;top:472px;width:77px;height:25px;background:#f0f7fc">2.36</div>
<div class="c " style="left:894px;top:472px;width:37px;height:25px;background:#efefef"><span style="color:#1f821f">平</span></div>
<div class="c " style="left:932px;top:472px;width:38px;height:25px;background:#efefef"><span style="color:#d41c1c">赢</span></div>
<div class="c " style="left:971px;top:472px;width:57px;height:25px;background:#efefef"><span style="color:#1818b8">小</span></div>
<div style="left:1px;top:472px;width:1px;height:25px;background:#bbbbbb"></div>
<div style="left:82px;top:472px;width:1px;height:25px;background:#bbbbbb"></div>
<div style="left:158px;top:472px;width:1px;height:25px;background:#bbbbbb"></div>
<div style="left:285px;top:472px;width:1px;height:25px;background:#bbbbbb"></div>
<div style="left:375px;top:472px;width:1px;height:25px;background:#bbbbbb"></div>
<div style="left:414px;top:472px;width:1px;height:25px;background:#bbbbbb"></div>
<div style="left:508px;top:472px;width:1px;height:25px;background:#bbbbbb"></div>
<div style="left:552px;top:472px;width:1px;height:25px;background:#bbbbbb"></div>
<div style="left:647px;top:472px;width:1px;height:25px;background:#bbbbbb"></div>
<div style="left:693px;top:472px;width:1px;height:25px;background:#bbbbbb"></div>
<div style="left:754px;top:472px;width:1px;height:25px;background:#bbbbbb"></div>
<div style="left:815px;top:472px;width:1px;height:25px;background:#bbbbbb"></div>
<div style="left:893px;top:472px;width:1px;height:25px;background:#bbbbbb"></div>
<div style="left:931px;top:472px;width:1px;height:25px;background:#bbbbbb"></div>
<div style="left:970px;top:472px;width:1px;height:25px;background:#bbbbbb"></div>
<div style="left:1px;top:497px;width:1026px;height:1px;background:#bbbbbb"></div>
<div style="left:1px;top:497px;width:81px;height:1px;background:#e897af"></div>
<div class="c lg" style="left:2px;top:498px;width:80px;height:25px;background:#cc1a4f">葡联杯</div>
<div class="c " style="left:83px;top:498px;width:75px;height:25px;background:#ffffff">25-01-08</div>
<div class="c " style="left:159px;top:498px;width:126px;height:25px;background:#ffffff"><span style="color:#1f821f">里斯本竞技(中)</span></div>
<div class="c " style="left:286px;top:498px;width:89px;height:25px;background:#ffffff"><span style="color:#d41c1c">1-0</span>(0-0)</div>
<div class="c " style="left:376px;top:498px;width:38px;height:25px;background:#ffffff">6-3</div>
<div class="c " style="left:415px;top:498px;width:93px;height:25px;background:#ffffff">波尔图</div>
<div class="c " style="left:509px;top:498px;width:43px;height:25px;background:#fdf9f6">0.94</div>
<div class="c " style="left:553px;top:498px;width:94px;height:25px;background:#fdf9f6">平/半</div>
<div class="c " style="left:648px;top:498px;width:45px;height:25px;background:#fdf9f6">0.95</div>
<div class="c " style="left:694px;top:498px;width:60px;height:25px;background:#f0f7fc">2.31</div>
<div class="c " style="left:755px;top:498px;width:60px;height:25px;background:#f0f7fc">3.23</div>
<div class="c " style="left:816px;top:498px;width:77px;height:25px;background:#f0f7fc">3.01</div>
<div class="c " style="left:894px;top:498px;width:37px;height:25px;background:#ffffff"><span style="color:#d41c1c">胜</span></div>
<div class="c " style="left:932px;top:498px;width:38px;height:25px;background:#ffffff"><span style="color:#d41c1c">赢</span></div>
<div class="c " style="left:971px;top:498px;width:57px;height:25px;background:#ffffff"><span style="color:#1818b8">小</span></div>
<div style="left:1px;top:498px;width:1px;height:25px;background:#bbbbbb"></div>
<div style="left:82px;top:498px;width:1px;height:25px;background:#bbbbbb"></div>
<div style="left:158px;top:498px;width:1px;height:25px;background:#bbbbbb"></div>
<div style="left:285px;top:498px;width:1px;height:25px;background:#bbbbbb"></div>
<div style="left:375px;top:498px;width:1px;height:25px;background:#bbbbbb"></div>
<div style="left:414px;top:498px;width:1px;height:25px;background:#bbbbbb"></div>
<div style="left:508px;top:498px;width:1px;height:25px;background:#bbbbbb"></div>
<div style="left:552px;top:498px;width:1px;height:25px;background:#bbbbbb"></div>
<div style="left:647px;top:498px;width:1px;height:25px;background:#bbbbbb"></div>
<div style="left:693px;top:498px;width:1px;height:25px;background:#bbbbbb"></div>
<div style="left:754px;top:498px;width:1px;height:25px;background:#bbbbbb"></div>
<div style="left:815px;top:498px;width:1px;height:25px;background:#bbbbbb"></div>
<div style="left:893px;top:498px;width:1px;height:25px;background:#bbbbbb"></div>
<div style="left:931px;top:498px;width:1px;height:25px;background:#bbbbbb"></div>
<div style="left:970px;top:498px;width:1px;height:25px;background:#bbbbbb"></div>
<div style="left:1px;top:523px;width:1026px;height:1px;background:#bbbbbb"></div>
<div style="left:1px;top:523px;width:81px;height:1px;background:#baa9b4"></div>
<div class="c lg" style="left:2px;top:524px;width:80px;height:25px;background:#006666">葡超</div>
<div class="c " style="left:83px;top:524px;width:75px;height:25px;background:#efefef">25-01-04</div>
<div class="c " style="left:159px;top:524px;width:126px;height:25px;background:#efefef">吉马良斯</div>
<div class="c " style="left:286px;top:524px;width:89px;height:25px;background:#efefef"><span style="color:#d41c1c">4-4</span>(1-2)</div>
<div class="c " style="left:376px;top:524px;width:38px;height:25px;background:#efefef">6-2</div>
<div class="c " style="left:415px;top:524px;width:93px;height:25px;background:#efefef"><span style="color:#1f821f">里斯本竞技</span></div>
<div class="c " style="left:509px;top:524px;width:43px;height:25px;background:#fdf9f6">0.92</div>
<div class="c " style="left:553px;top:524px;width:94px;height:25px;background:#fdf9f6">受半球</div>
<div class="c " style="left:648px;top:524px;width:45px;height:25px;background:#fdf9f6">0.97</div>
<div class="c " style="left:694px;top:524px;width:60px;height:25px;background:#f0f7fc">3.78</div>
<div class="c " style="left:755px;top:524px;width:60px;height:25px;background:#f0f7fc">3.51</div>
<div class="c " style="left:816px;top:524px;width:77px;height:25px;background:#f0f7fc">1.94</div>
<div class="c " style="left:894px;top:524px;width:37px;height:25px;background:#efefef"><span style="color:#1f821f">平</span></div>
<div class="c " style="left:932px;top:524px;width:38px;height:25px;background:#efefef"><span style="color:#1818b8">输</span></div>
<div class="c " style="left:971px;top:524px;width:57px;height:25px;background:#efefef"><span style="color:#d41c1c">大</span></div>
<div style="left:1px;top:524px;width:1px;height:25px;background:#bbbbbb"></div>
<div style="left:82px;top:524px;width:1px;height:25px;background:#bbbbbb"></div>
<div style="left:158px;top:524px;width:1px;height:25px;background:#bbbbbb"></div>
<div style="left:285px;top:524px;width:1px;height:25px;background:#bbbbbb"></div>
<div style="left:375px;top:524px;width:1px;height:25px;background:#bbbbbb"></div>
<div style="left:414px;top:524px;width:1px;height:25px;background:#bbbbbb"></div>
<div style="left:508px;top:524px;width:1px;height:25px;background:#bbbbbb"></div>
<div style="left:552px;top:524px;width:1px;height:25px;background:#bbbbbb"></div>
<div style="left:647px;top:524px;width:1px;height:25px;background:#bbbbbb"></div>
<div style="left:693px;top:524px;width:1px;height:25px;background:#bbbbbb"></div>
<div style="left:754px;top:524px;width:1px;height:25px;background:#bbbbbb"></div>
<div style="left:815px;top:524px;width:1px;height:25px;background:#bbbbbb"></div>
<div style="left:893px;top:524px;width:1px;height:25px;background:#bbbbbb"></div>
<div style="left:931px;top:524px;width:1px;height:25px;background:#bbbbbb"></div>
<div style="left:970px;top:524px;width:1px;height:25px;background:#bbbbbb"></div>
<div style="left:1px;top:549px;width:1026px;height:1px;background:#bbbbbb"></div>
<div style="left:1px;top:549px;width:81px;height:1px;background:#8cbaba"></div>
<div class="c lg" style="left:2px;top:550px;width:80px;height:25px;background:#006666">葡超</div>
<div class="c " style="left:83px;top:550px;width:75px;height:25px;background:#ffffff">24-12-30</div>
<div class="c " style="left:159px;top:550px;width:126px;height:25px;background:#ffffff"><span style="color:#1f821f">里斯本竞技</span></div>
<div class="c " style="left:286px;top:550px;width:89px;height:25px;background:#ffffff"><span style="color:#d41c1c">1-0</span>(1-0)</div>
<div class="c " style="left:376px;top:550px;width:38px;height:25px;background:#ffffff">4-8</div>
<div class="c " style="left:415px;top:550px;width:93px;height:25px;background:#ffffff">本菲卡</div>
<div class="c " style="left:509px;top:550px;width:43px;height:25px;background:#fdf9f6">0.83</div>
<div class="c " style="left:553px;top:550px;width:94px;height:25px;background:#fdf9f6">平手</div>
<div class="c " style="left:648px;top:550px;width:45px;height:25px;background:#fdf9f6">1.06</div>
<div class="c " style="left:694px;top:550px;width:60px;height:25px;background:#f0f7fc">2.49</div>
<div class="c " style="left:755px;top:550px;width:60px;height:25px;background:#f0f7fc">3.39</div>
<div class="c " style="left:816px;top:550px;width:77px;height:25px;background:#f0f7fc">2.70</div>
<div class="c " style="left:894px;top:550px;width:37px;height:25px;background:#ffffff"><span style="color:#d41c1c">胜</span></div>
<div class="c " style="left:932px;top:550px;width:38px;height:25px;background:#ffffff"><span style="color:#d41c1c">赢</span></div>
<div class="c " style="left:971px;top:550px;width:57px;height:25px;background:#ffffff"><span style="color:#1818b8">小</span></div>
<div style="left:1px;top:550px;width:1px;height:25px;background:#bbbbbb"></div>
<div style="left:82px;top:550px;width:1px;height:25px;background:#bbbbbb"></div>
<div style="left:158px;top:550px;width:1px;height:25px;background:#bbbbbb"></div>
<div style="left:285px;top:550px;width:1px;height:25px;background:#bbbbbb"></div>
<div style="left:375px;top:550px;width:1px;height:25px;background:#bbbbbb"></div>
<div style="left:414px;top:550px;width:1px;height:25px;background:#bbbbbb"></div>
<div style="left:508px;top:550px;width:1px;height:25px;background:#bbbbbb"></div>
<div style="left:552px;top:550px;width:1px;height:25px;background:#bbbbbb"></div>
<div style="left:647px;top:550px;width:1px;height:25px;background:#bbbbbb"></div>
<div style="left:693px;top:550px;width:1px;height:25px;background:#bbbbbb"></div>
<div style="left:754px;top:550px;width:1px;height:25px;background:#bbbbbb"></div>
<div style="left:815px;top:550px;width:1px;height:25px;background:#bbbbbb"></div>
<div style="left:893px;top:550px;width:1px;height:25px;background:#bbbbbb"></div>
<div style="left:931px;top:550px;width:1px;height:25px;background:#bbbbbb"></div>
<div style="left:970px;top:550px;width:1px;height:25px;background:#bbbbbb"></div>
<div style="left:1px;top:575px;width:1026px;height:1px;background:#bbbbbb"></div>
<div style="left:1px;top:575px;width:81px;height:1px;background:#8cbaba"></div>
<div class="c lg" style="left:2px;top:576px;width:80px;height:25px;background:#006666">葡超</div>
<div class="c " style="left:83px;top:576px;width:75px;height:25px;background:#efefef">24-12-23</div>
<div class="c " style="left:159px;top:576px;width:126px;height:25px;background:#efefef">吉维森特</div>
<div class="c " style="left:286px;top:576px;width:89px;height:25px;background:#efefef"><span style="color:#d41c1c">0-0</span>(0-0)</div>
<div class="c " style="left:376px;top:576px;width:38px;height:25px;background:#efefef">3-8</div>
<div class="c " style="left:415px;top:576px;width:93px;height:25px;background:#efefef"><span style="color:#1f821f">里斯本竞技</span></div>
<div class="c " style="left:509px;top:576px;width:43px;height:25px;background:#fdf9f6">0.88</div>
<div class="c " style="left:553px;top:576px;width:94px;height:25px;background:#fdf9f6">受球半</div>
<div class="c " style="left:648px;top:576px;width:45px;height:25px;background:#fdf9f6">1.01</div>
<div class="c " style="left:694px;top:576px;width:60px;height:25px;background:#f0f7fc">7.98</div>
<div class="c " style="left:755px;top:576px;width:60px;height:25px;background:#f0f7fc">5.16</div>
<div class="c " style="left:816px;top:576px;width:77px;height:25px;background:#f0f7fc">1.34</div>
<div class="c " style="left:894px;top:576px;width:37px;height:25px;background:#efefef"><span style="color:#1f821f">平</span></div>
<div class="c " style="left:932px;top:576px;width:38px;height:25px;background:#efefef"><span style="color:#1818b8">输</span></div>
<div class="c " style="left:971px;top:576px;width:57px;height:25px;background:#efefef"><span style="color:#1818b8">小</span></div>
<div style="left:1px;top:576px;width:1px;height:25px;background:#bbbbbb"></div>
<div style="left:82px;top:576px;width:1px;height:25px;background:#bbbbbb"></div>
<div style="left:158px;top:576px;width:1px;height:25px;background:#bbbbbb"></div>
<div style="left:285px;top:576px;width:1px;height:25px;background:#bbbbbb"></div>
<div style="left:375px;top:576px;width:1px;height:25px;background:#bbbbbb"></div>
<div style="left:414px;top:576px;width:1px;height:25px;background:#bbbbbb"></div>
<div style="left:508px;top:576px;width:1px;height:25px;background:#bbbbbb"></div>
<div style="left:552px;top:576px;width:1px;height:25px;background:#bbbbbb"></div>
<div style="left:647px;top:576px;width:1px;height:25px;background:#bbbbbb"></div>
<div style="left:693px;top:576px;width:1px;height:25px;background:#bbbbbb"></div>
<div style="left:754px;top:576px;width:1px;height:25px;background:#bbbbbb"></div>
<div style="left:815px;top:576px;width:1px;height:25px;background:#bbbbbb"></div>
<div style="left:893px;top:576px;width:1px;height:25px;background:#bbbbbb"></div>
<div style="left:931px;top:576px;width:1px;height:25px;background:#bbbbbb"></div>
<div style="left:970px;top:576px;width:1px;height:25px;background:#bbbbbb"></div>
<div style="left:1px;top:601px;width:1026px;height:1px;background:#bbbbbb"></div>
<div style="left:1px;top:601px;width:81px;height:1px;background:#8ec6b7"></div>
<div class="c lg" style="left:2px;top:602px;width:80px;height:25px;background:#0a9e5a">葡杯</div>
<div class="c " style="left:83px;top:602px;width:75px;height:25px;background:#ffffff">24-12-19</div>
<div class="c " style="left:159px;top:602px;width:126px;height:25px;background:#ffffff"><span style="color:#1f821f"><span class="bd">2</span>里斯本竞技</span></div>
<div class="c " style="left:286px;top:602px;width:89px;height:25px;background:#ffffff"><span style="color:#d41c1c">1-1</span>(0-0)</div>
<div class="c " style="left:376px;top:602px;width:38px;height:25px;background:#ffffff">5-3</div>
<div class="c " style="left:415px;top:602px;width:93px;height:25px;background:#ffffff">圣克拉拉</div>
<div class="c " style="left:509px;top:602px;width:43px;height:25px;background:#fdf9f6">0.82</div>
<div class="c " style="left:553px;top:602px;width:94px;height:25px;background:#fdf9f6">球半</div>
<div class="c " style="left:648px;top:602px;width:45px;height:25px;background:#fdf9f6">1.06</div>
<div class="c " style="left:694px;top:602px;width:60px;height:25px;background:#f0f7fc">1.27</div>
<div class="c " style="left:755px;top:602px;width:60px;height:25px;background:#f0f7fc">5.13</div>
<div class="c " style="left:816px;top:602px;width:77px;height:25px;background:#f0f7fc">9.53</div>
<div class="c " style="left:894px;top:602px;width:37px;height:25px;background:#ffffff"><span style="color:#1f821f">平</span></div>
<div class="c " style="left:932px;top:602px;width:38px;height:25px;background:#ffffff"><span style="color:#1818b8">输</span></div>
<div class="c " style="left:971px;top:602px;width:57px;height:25px;background:#ffffff"><span style="color:#1818b8">小</span></div>
<div style="left:1px;top:602px;width:1px;height:25px;background:#bbbbbb"></div>
<div style="left:82px;top:602px;width:1px;height:25px;background:#bbbbbb"></div>
<div style="left:158px;top:602px;width:1px;height:25px;background:#bbbbbb"></div>
<div style="left:285px;top:602px;width:1px;height:25px;background:#bbbbbb"></div>
<div style="left:375px;top:602px;width:1px;height:25px;background:#bbbbbb"></div>
<div style="left:414px;top:602px;width:1px;height:25px;background:#bbbbbb"></div>
<div style="left:508px;top:602px;width:1px;height:25px;background:#bbbbbb"></div>
<div style="left:552px;top:602px;width:1px;height:25px;background:#bbbbbb"></div>
<div style="left:647px;top:602px;width:1px;height:25px;background:#bbbbbb"></div>
<div style="left:693px;top:602px;width:1px;height:25px;background:#bbbbbb"></div>
<div style="left:754px;top:602px;width:1px;height:25px;background:#bbbbbb"></div>
<div style="left:815px;top:602px;width:1px;height:25px;background:#bbbbbb"></div>
<div style="left:893px;top:602px;width:1px;height:25px;background:#bbbbbb"></div>
<div style="left:931px;top:602px;width:1px;height:25px;background:#bbbbbb"></div>
<div style="left:970px;top:602px;width:1px;height:25px;background:#bbbbbb"></div>
<div style="left:1px;top:627px;width:1026px;height:1px;background:#bbbbbb"></div>
<div style="left:1px;top:627px;width:81px;height:1px;background:#8ec6b7"></div>
<div class="c lg" style="left:2px;top:628px;width:80px;height:25px;background:#006666">葡超</div>
<div class="c " style="left:83px;top:628px;width:75px;height:25px;background:#efefef">24-12-15</div>
<div class="c " style="left:159px;top:628px;width:126px;height:25px;background:#efefef"><span style="color:#1f821f">里斯本竞技</span></div>
<div class="c " style="left:286px;top:628px;width:89px;height:25px;background:#efefef"><span style="color:#d41c1c">3-2</span>(1-1)</div>
<div class="c " style="left:376px;top:628px;width:38px;height:25px;background:#efefef">10-1</div>
<div class="c " style="left:415px;top:628px;width:93px;height:25px;background:#efefef">博阿维斯塔</div>
<div class="c " style="left:509px;top:628px;width:43px;height:25px;background:#fdf9f6">0.85</div>
<div class="c " style="left:553px;top:628px;width:94px;height:25px;background:#fdf9f6">两/两球半</div>
<div class="c " style="left:648px;top:628px;width:45px;height:25px;background:#fdf9f6">1.04</div>
<div class="c " style="left:694px;top:628px;width:60px;height:25px;background:#f0f7fc">1.11</div>
<div class="c " style="left:755px;top:628px;width:60px;height:25px;background:#f0f7fc">9.31</div>
<div class="c " style="left:816px;top:628px;width:77px;height:25px;background:#f0f7fc">18.64</div>
<div class="c " style="left:894px;top:628px;width:37px;height:25px;background:#efefef"><span style="color:#d41c1c">胜</span></div>
<div class="c " style="left:932px;top:628px;width:38px;height:25px;background:#efefef"><span style="color:#1818b8">输</span></div>
<div class="c " style="left:971px;top:628px;width:57px;height:25px;background:#efefef"><span style="color:#d41c1c">大</span></div>
<div style="left:1px;top:628px;width:1px;height:25px;background:#bbbbbb"></div>
<div style="left:82px;top:628px;width:1px;height:25px;background:#bbbbbb"></div>
<div style="left:158px;top:628px;width:1px;height:25px;background:#bbbbbb"></div>
<div style="left:285px;top:628px;width:1px;height:25px;background:#bbbbbb"></div>
<div style="left:375px;top:628px;width:1px;height:25px;background:#bbbbbb"></div>
<div style="left:414px;top:628px;width:1px;height:25px;background:#bbbbbb"></div>
<div style="left:508px;top:628px;width:1px;height:25px;background:#bbbbbb"></div>
<div style="left:552px;top:628px;width:1px;height:25px;background:#bbbbbb"></div>
<div style="left:647px;top:628px;width:1px;height:25px;background:#bbbbbb"></div>
<div style="left:693px;top:628px;width:1px;height:25px;background:#bbbbbb"></div>
<div style="left:754px;top:628px;width:1px;height:25px;background:#bbbbbb"></div>
<div style="left:815px;top:628px;width:1px;height:25px;background:#bbbbbb"></div>
<div style="left:893px;top:628px;width:1px;height:25px;background:#bbbbbb"></div>
<div style="left:931px;top:628px;width:1px;height:25px;background:#bbbbbb"></div>
<div style="left:970px;top:628px;width:1px;height:25px;background:#bbbbbb"></div>
<div style="left:1px;top:653px;width:1026px;height:1px;background:#bbbbbb"></div>
<div style="left:1px;top:653px;width:81px;height:1px;background:#c5b6a3"></div>
<div class="c lg" style="left:2px;top:654px;width:80px;height:25px;background:#ff5500">欧冠杯</div>
<div class="c " style="left:83px;top:654px;width:75px;height:25px;background:#ffffff">24-12-11</div>
<div class="c " style="left:159px;top:654px;width:126px;height:25px;background:#ffffff">布鲁日</div>
<div class="c " style="left:286px;top:654px;width:89px;height:25px;background:#ffffff"><span style="color:#d41c1c">2-1</span>(1-1)</div>
<div class="c " style="left:376px;top:654px;width:38px;height:25px;background:#ffffff">3-0</div>
<div class="c " style="left:415px;top:654px;width:93px;height:25px;background:#ffffff"><span style="color:#1f821f">里斯本竞技</span></div>
<div class="c " style="left:509px;top:654px;width:43px;height:25px;background:#fdf9f6">1.12</div>
<div class="c " style="left:553px;top:654px;width:94px;height:25px;background:#fdf9f6">平/半</div>
<div class="c " style="left:648px;top:654px;width:45px;height:25px;background:#fdf9f6">0.78</div>
<div class="c " style="left:694px;top:654px;width:60px;height:25px;background:#f0f7fc">2.45</div>
<div class="c " style="left:755px;top:654px;width:60px;height:25px;background:#f0f7fc">3.44</div>
<div class="c " style="left:816px;top:654px;width:77px;height:25px;background:#f0f7fc">2.85</div>
<div class="c " style="left:894px;top:654px;width:37px;height:25px;background:#ffffff"><span style="color:#1818b8">负</span></div>
<div class="c " style="left:932px;top:654px;width:38px;height:25px;background:#ffffff"><span style="color:#1818b8">输</span></div>
<div class="c " style="left:971px;top:654px;width:57px;height:25px;background:#ffffff"><span style="color:#d41c1c">大</span></div>
<div style="left:1px;top:654px;width:1px;height:25px;background:#bbbbbb"></div>
<div style="left:82px;top:654px;width:1px;height:25px;background:#bbbbbb"></div>
<div style="left:158px;top:654px;width:1px;height:25px;background:#bbbbbb"></div>
<div style="left:285px;top:654px;width:1px;height:25px;background:#bbbbbb"></div>
<div style="left:375px;top:654px;width:1px;height:25px;background:#bbbbbb"></div>
<div style="left:414px;top:654px;width:1px;height:25px;background:#bbbbbb"></div>
<div style="left:508px;top:654px;width:1px;height:25px;background:#bbbbbb"></div>
<div style="left:552px;top:654px;width:1px;height:25px;background:#bbbbbb"></div>
<div style="left:647px;top:654px;width:1px;height:25px;background:#bbbbbb"></div>
<div style="left:693px;top:654px;width:1px;height:25px;background:#bbbbbb"></div>
<div style="left:754px;top:654px;width:1px;height:25px;background:#bbbbbb"></div>
<div style="left:815px;top:654px;width:1px;height:25px;background:#bbbbbb"></div>
<div style="left:893px;top:654px;width:1px;height:25px;background:#bbbbbb"></div>
<div style="left:931px;top:654px;width:1px;height:25px;background:#bbbbbb"></div>
<div style="left:970px;top:654px;width:1px;height:25px;background:#bbbbbb"></div>
<div style="left:1px;top:679px;width:1026px;height:1px;background:#bbbbbb"></div>
<div style="left:1px;top:679px;width:81px;height:1px;background:#c5b6a3"></div>
<div class="c lg" style="left:2px;top:680px;width:80px;height:25px;background:#006666">葡超</div>
<div class="c " style="left:83px;top:680px;width:75px;height:25px;background:#efefef">24-12-06</div>
<div class="c " style="left:159px;top:680px;width:126px;height:25px;background:#efefef">摩里伦斯</div>
<div class="c " style="left:286px;top:680px;width:89px;height:25px;background:#efefef"><span style="color:#d41c1c">2-1</span>(2-1)</div>
<div class="c " style="left:376px;top:680px;width:38px;height:25px;background:#efefef">4-6</div>
<div class="c " style="left:415px;top:680px;width:93px;height:25px;background:#efefef"><span style="color:#1f821f">里斯本竞技</span></div>
<div class="c " style="left:509px;top:680px;width:43px;height:25px;background:#fdf9f6">0.88</div>
<div class="c " style="left:553px;top:680px;width:94px;height:25px;background:#fdf9f6">受球半</div>
<div class="c " style="left:648px;top:680px;width:45px;height:25px;background:#fdf9f6">1.01</div>
<div class="c " style="left:694px;top:680px;width:60px;height:25px;background:#f0f7fc">8.99</div>
<div class="c " style="left:755px;top:680px;width:60px;height:25px;background:#f0f7fc">5.14</div>
<div class="c " style="left:816px;top:680px;width:77px;height:25px;background:#f0f7fc">1.32</div>
<div class="c " style="left:894px;top:680px;width:37px;height:25px;background:#efefef"><span style="color:#1818b8">负</span></div>
<div class="c " style="left:932px;top:680px;width:38px;height:25px;background:#efefef"><span style="color:#1818b8">输</span></div>
<div class="c " style="left:971px;top:680px;width:57px;height:25px;background:#efefef"><span style="color:#d41c1c">大</span></div>
<div style="left:1px;top:680px;width:1px;height:25px;background:#bbbbbb"></div>
<div style="left:82px;top:680px;width:1px;height:25px;background:#bbbbbb"></div>
<div style="left:158px;top:680px;width:1px;height:25px;background:#bbbbbb"></div>
<div style="left:285px;top:680px;width:1px;height:25px;background:#bbbbbb"></div>
<div style="left:375px;top:680px;width:1px;height:25px;background:#bbbbbb"></div>
<div style="left:414px;top:680px;width:1px;height:25px;background:#bbbbbb"></div>
<div style="left:508px;top:680px;width:1px;height:25px;background:#bbbbbb"></div>
<div style="left:552px;top:680px;width:1px;height:25px;background:#bbbbbb"></div>
<div style="left:647px;top:680px;width:1px;height:25px;background:#bbbbbb"></div>
<div style="left:693px;top:680px;width:1px;height:25px;background:#bbbbbb"></div>
<div style="left:754px;top:680px;width:1px;height:25px;background:#bbbbbb"></div>
<div style="left:815px;top:680px;width:1px;height:25px;background:#bbbbbb"></div>
<div style="left:893px;top:680px;width:1px;height:25px;background:#bbbbbb"></div>
<div style="left:931px;top:680px;width:1px;height:25px;background:#bbbbbb"></div>
<div style="left:970px;top:680px;width:1px;height:25px;background:#bbbbbb"></div>
<div style="left:1px;top:705px;width:1026px;height:1px;background:#bbbbbb"></div>
<div style="left:2px;top:706px;width:1025px;height:25px;background:#fff"></div>
<div class="c sm" style="left:1px;top:706px;width:1026px;height:25px">近<span style="color:#d41c1c">10</span>场,胜4平4负2, 胜率:<span style="color:#d41c1c">40%</span> 让胜率:<span style="color:#d41c1c">40%</span> 大率:<span style="color:#d41c1c">50%</span> 单率:<span style="color:#d41c1c">60%</span></div>
<div style="left:1px;top:706px;width:1px;height:25px;background:#bbbbbb"></div>
<div style="left:1px;top:731px;width:1026px;height:1px;background:#bbbbbb"></div>
<div class="sel" style="left:541px;top:407px;width:59px;height:17px"><span style="left:5px">Crow*</span><svg class="chev" width="10" height="7"><path d="M1 1.2 L5 5.2 L9 1.2" fill="none" stroke="#000" stroke-width="2"/></svg></div>
<div class="sel" style="left:609px;top:407px;width:49px;height:17px"><span style="left:3px">终指</span><svg class="chev" width="10" height="7"><path d="M1 1.2 L5 5.2 L9 1.2" fill="none" stroke="#000" stroke-width="2"/></svg></div>
<div class="sel" style="left:729px;top:407px;width:68px;height:17px"><span style="left:3px">平均值</span><svg class="chev" width="10" height="7"><path d="M1 1.2 L5 5.2 L9 1.2" fill="none" stroke="#000" stroke-width="2"/></svg></div>
<div class="sel" style="left:806px;top:407px;width:49px;height:17px"><span style="left:3px">终指</span><svg class="chev" width="10" height="7"><path d="M1 1.2 L5 5.2 L9 1.2" fill="none" stroke="#000" stroke-width="2"/></svg></div>
<div class="sel" style="left:935px;top:407px;width:49px;height:17px"><span style="left:3px">全场</span><svg class="chev" width="10" height="7"><path d="M1 1.2 L5 5.2 L9 1.2" fill="none" stroke="#000" stroke-width="2"/></svg></div>
</div></body></html>
